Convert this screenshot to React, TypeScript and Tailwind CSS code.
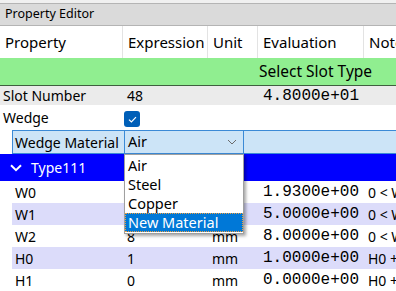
import React from "react";

const COLS = ["w-[123px]", "w-[85px]", "w-[50px]", "w-[106px]", "w-[140px]"];

type Row = { name: string; expr: string; unit: string; evalv: string; note: string };

const rows: Row[] = [
  { name: "W0", expr: "", unit: "", evalv: "1.9300e+00", note: "0 < W0" },
  { name: "W1", expr: "", unit: "", evalv: "5.0000e+00", note: "0 < W1" },
  { name: "W2", expr: "8", unit: "mm", evalv: "8.0000e+00", note: "0 < W2" },
  { name: "H0", expr: "1", unit: "mm", evalv: "1.0000e+00", note: "H0 + H1" },
  { name: "H1", expr: "0", unit: "mm", evalv: "0.0000e+00", note: "H0 + H1" },
];

function Check() {
  return (
    <span className="flex h-[16px] w-[16px] items-center justify-center rounded-[3px] bg-[#005fb8]">
      <svg width="9" height="7" viewBox="0 0 9 7">
        <path d="M1 3.6 L3.4 6 L8 1.2" fill="none" stroke="#fff" strokeWidth="1.2" />
      </svg>
    </span>
  );
}

export default function App() {
  return (
    <div
      className="relative h-[291px] w-[396px] overflow-hidden whitespace-nowrap bg-[#f0f0f0] pt-[3px] text-[14px] text-black"
      style={{ fontFamily: '"Noto Sans", sans-serif' }}
    >
      {/* title */}
      <div className="flex h-[23px] items-center border-y border-[#b4b4b4] bg-[#dadada] pl-[5px] text-[12.5px]">
        Property Editor
      </div>

      <div className="w-[520px]">
        {/* header */}
        <div className="flex h-[32px] bg-white">
          {["Property", "Expression", "Unit", "Evaluation", "Note"].map((h, i) => (
            <div
              key={h}
              className={`${COLS[i]} flex items-center border-r border-[#e3e3e3] pl-[5px] text-[15px]`}
            >
              {h}
            </div>
          ))}
        </div>

        {/* slot type */}
        <div className="flex h-[27px] items-center bg-[#90ee90] pl-[259px] text-[15.5px]">
          Select Slot Type
        </div>
        <div className="h-px bg-[#3f5f3f]" />

        <div className="flex h-[19px] items-center bg-[#ebebeb]">
          <div className={`${COLS[0]} pl-[3px]`}>Slot Number</div>
          <div className={`${COLS[1]} pl-[4px]`}>48</div>
          <div className={COLS[2]} />
          <div className={`${COLS[3]} pl-[5px] font-['Liberation_Mono',monospace] text-[16px]`}>
            4.8000e+01
          </div>
        </div>

        <div className="flex h-[25px] items-center bg-white">
          <div className={`${COLS[0]} pl-[3px]`}>Wedge</div>
          <div className={`${COLS[1]} pl-[1px] pt-[3px]`}>
            <Check />
          </div>
        </div>

        {/* wedge material */}
        <div className="flex bg-white pl-[12px]">
          <div className="flex h-[24px] flex-1 items-center border border-[#3b8ad6] bg-[#cce4f7]">
            <div className="w-[111px] pl-[2px]">Wedge Material</div>
            <div className="flex h-full w-[120px] items-center justify-between border-x border-[#3b8ad6] pl-[3px] pr-[6px] text-[14.5px]">
              <span>Air</span>
              <svg width="10" height="6" viewBox="0 0 10 6">
                <path d="M1 1 L5 5 L9 1" fill="none" stroke="#6b6b6b" strokeWidth="1" />
              </svg>
            </div>
          </div>
        </div>

        {/* group */}
        <div className="flex h-[27px] items-center bg-[#0000ff] text-[14px] text-white">
          <svg className="ml-[10px] mr-[9px]" width="12" height="8" viewBox="0 0 12 8">
            <path d="M1 1.2 L6 6.2 L11 1.2" fill="none" stroke="#fff" strokeWidth="2" />
          </svg>
          Type111
        </div>

        {rows.map((r, i) => (
          <div key={r.name} className="flex bg-white pl-[12px]">
            <div className={`flex h-[22px] flex-1 items-center ${i % 2 ? "bg-[#dcdcfa]" : "bg-white"}`}>
              <div className="w-[111px] pl-[3px]">{r.name}</div>
              <div className={`${COLS[1]} pl-[4px]`}>{r.expr}</div>
              <div className={`${COLS[2]} pl-[4px]`}>{r.unit}</div>
              <div className={`${COLS[3]} pl-[5px] font-['Liberation_Mono',monospace] text-[16px]`}>
                {r.evalv}
              </div>
              <div className="pl-[4px]">{r.note}</div>
            </div>
          </div>
        ))}
      </div>

      {/* dropdown popup */}
      <div className="absolute left-[124px] top-[154px] w-[120px] border border-[#a0a0a0] bg-white py-[1px] text-[14.5px] shadow-[2px_2px_3px_rgba(0,0,0,0.35)]">
        <div className="flex h-[19px] items-center pl-[3px]">Air</div>
        <div className="flex h-[19px] items-center pl-[3px]">Steel</div>
        <div className="flex h-[19px] items-center pl-[3px]">Copper</div>
        <div className="flex h-[19px] items-center bg-[#0078d7] pl-[3px] text-white outline-1 -outline-offset-1 outline-dotted outline-[#f0a040]">
          New Material
        </div>
      </div>
    </div>
  );
}
